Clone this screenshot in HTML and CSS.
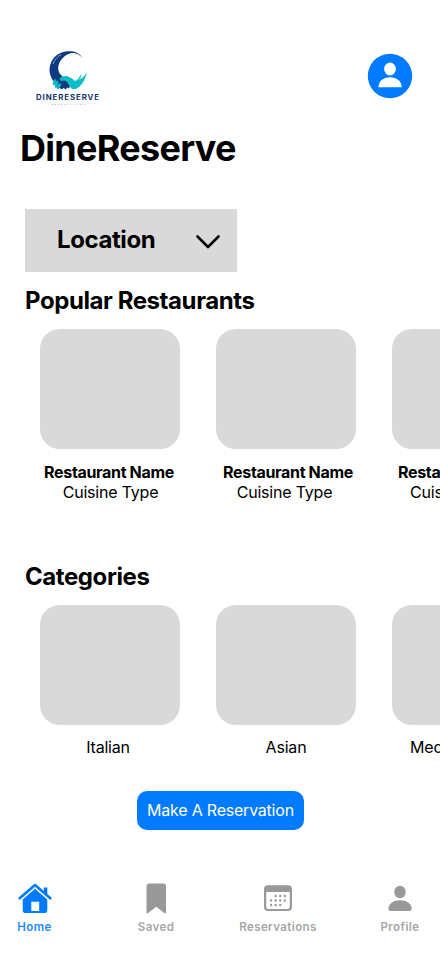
FILE: index.html
```html
<!DOCTYPE html>
<html lang="en">
<head>
<meta charset="utf-8">
<title>DineReserve</title>
<link rel="stylesheet" href="styles.css">
</head>
<body>
<header class="top">
  <svg class="logo" viewBox="0 0 90 75" role="img" aria-label="DineReserve logo">
    <path fill="#0b3a80" d="M57.700 18C54 12.500 49 10.900 43 11.200C32 11.700 24.500 20 24.500 30C24.500 34 26 37 28 41L38 37L35 34C32.500 30 32.500 25 36 20C39.500 15.500 44 13 48 13C52 13.300 55 15 57.700 18Z"/>
    <path fill="#103c7d" d="M27 36L36 36L42 41L45 46L44 48.500L42 47.500L41 49.500L38.500 48L37 49.500L34 47.500L31 44Z"/>
    <path fill="#08bfc9" d="M34.500 38.500C37 36.500 40 35.500 43 36.500L47 38.500L50 41C55 40 59.500 37 61.700 32.500C60.500 38 59 42 55 46C52 49 48 50.500 45.500 47.500L43.500 43L40 40.500L36 41Z"/>
    <path fill="#08bfc9" d="M56.500 34L53 39L50 41.500C54 41 56 38 56.500 34Z"/>
    <path stroke="#08b7c5" stroke-width="2.600" stroke-linecap="round" d="M30 40.500L29 44M32.300 42L31 46.500M35 44.500L33 47.800"/>
    <path stroke="#fff" stroke-width=".5" fill="none" d="M28 24C29.500 20 32 17 36 14.500"/>
    <text class="logo-name" x="11" y="60" textLength="64" lengthAdjust="spacingAndGlyphs">DINERESERVE</text>
    <text class="logo-sub" x="26.500" y="64.500" textLength="34">RESERVATION</text>
  </svg>
  <svg class="avatar" viewBox="0 0 46 46" role="img" aria-label="Account">
    <circle cx="23" cy="23" r="22.200" fill="#007aff"/>
    <ellipse cx="23" cy="16" rx="5.900" ry="6.500" fill="#fff"/>
    <path fill="#fff" d="M11.500 34.300C11.500 28.500 16 24.300 23 24.300S34.700 28.500 34.700 34.300Z"/>
  </svg>
</header>
<h1 class="title">DineReserve</h1>
<button class="location"><span>Location</span>
  <svg class="chevron" viewBox="0 0 24 14"><path d="M1.500 1.500L12 12L22.500 1.500"/></svg>
</button>
<section class="popular">
  <h2>Popular Restaurants</h2>
  <div class="cards">
    <article class="card"><div class="thumb"></div><h3>Restaurant Name</h3><p>Cuisine Type</p></article>
    <article class="card card-mid"><div class="thumb"></div><h3>Restaurant Name</h3><p>Cuisine Type</p></article>
    <article class="card card-last"><div class="thumb"></div><h3>Restaurant Name</h3><p>Cuisine Type</p></article>
  </div>
</section>
<section class="categories">
  <h2>Categories</h2>
  <div class="cards">
    <article class="card"><div class="thumb"></div><p>Italian</p></article>
    <article class="card"><div class="thumb"></div><p>Asian</p></article>
    <article class="card card-last"><div class="thumb"></div><p>Mediterranean</p></article>
  </div>
</section>
<button class="reserve">Make A Reservation</button>
<nav class="tabs">
  <a class="tab active">
    <svg viewBox="0 0 36 32">
      <path d="M2.700 15.300L18 2L33.300 15.300" fill="none" stroke="currentColor" stroke-width="2.600" stroke-linecap="round" stroke-linejoin="round"/>
      <path fill="currentColor" d="M26.800 4.500h3.500v8l-3.500-3Z"/>
      <path fill="currentColor" fill-rule="evenodd" d="M18 5.700L30.300 16.500V27.200Q30.300 30 27.500 30H8.500Q5.700 30 5.700 27.200V16.500ZM14.300 18.700V28H22.200V18.700Z"/>
    </svg>
    <span>Home</span>
  </a>
  <a class="tab">
    <svg viewBox="0 0 36 32"><path fill="currentColor" d="M8.500 3.500Q8.500 .5 11.500 .5H25Q28 .5 28 3.500V29.500Q27.500 31 26 29.800L18.300 23.800L10.500 29.800Q9 31 8.500 29.500Z"/></svg>
    <span>Saved</span>
  </a>
  <a class="tab">
    <svg viewBox="0 0 36 32">
      <path fill="currentColor" fill-rule="evenodd" d="M8 2.200H28Q32 2.200 32 6.200V24Q32 28 28 28H8Q4 28 4 24V6.200Q4 2.200 8 2.200ZM6.200 9.100V23.700Q6.200 26 8.500 26H27.500Q29.800 26 29.800 23.700V9.100Z"/>
      <path stroke="currentColor" stroke-width="2.400" stroke-linecap="round" stroke-dasharray="0 4.550" d="M15.700 13H25M11.100 17.500H25M11.100 22H20.500"/>
    </svg>
    <span>Reservations</span>
  </a>
  <a class="tab tab-last">
    <svg viewBox="0 0 36 32"><ellipse cx="18" cy="9" rx="5.700" ry="6.200" fill="currentColor"/><path fill="currentColor" d="M6.400 25.500C6.700 20.500 11.500 17.300 18 17.300S29.400 20.500 29.700 25.500Q29.700 28 27.500 28H8.600Q6.400 28 6.400 25.500Z"/></svg>
    <span>Profile</span>
  </a>
</nav>
</body>
</html>
```
FILE: styles.css
```css
* { box-sizing: border-box; }

body {
  margin: 0;
  width: 440px;
  height: 956px;
  overflow: hidden;
  background: #fff;
  color: #000;
  font-family: Inter, sans-serif;
  font-size: 16px;
  line-height: 20px;
}

h1, h2, h3, p { margin: 0; }
svg { display: block; }

.top {
  display: flex;
  justify-content: space-between;
  align-items: flex-start;
  padding: 40px 27px 0 25px;
  height: 126px;
}
.logo { width: 90px; height: 75px; }
.logo-name { font: 700 7px Inter, sans-serif; letter-spacing: 0.8px; fill: #17356c; }
.logo-sub { font: 400 2.6px Lato, sans-serif; fill: #75839b; }
.avatar { width: 46px; height: 46px; margin-top: 13px; }

.title {
  margin-left: 20px;
  font-size: 36px;
  line-height: 44px;
  letter-spacing: -0.7px;
}

.location {
  display: flex;
  align-items: center;
  justify-content: space-between;
  width: 212px;
  height: 63px;
  margin: 39px 0 14px 25px;
  padding: 0 17px 2px 32px;
  border: 0;
  background: #d9d9d9;
  color: #000;
  font: 700 24px/30px Inter, sans-serif;
  letter-spacing: -0.4px;
}
.chevron {
  width: 24px;
  height: 14px;
  margin-top: 5px;
  fill: none;
  stroke: #000;
  stroke-width: 2.6;
  stroke-linecap: round;
  stroke-linejoin: round;
}

h2 {
  margin-left: 25px;
  font-size: 24px;
  line-height: 30px;
  letter-spacing: -0.42px;
}
.cards {
  display: flex;
  gap: 36px;
  margin-top: 13px;
  padding-left: 40px;
  overflow: hidden;
}
.card {
  flex: 0 0 140px;
  text-align: center;
  white-space: nowrap;
}
.thumb {
  height: 120px;
  margin-bottom: 13px;
  border-radius: 20px;
  background: #d9d9d9;
}
.card h3 { font-size: 16px; line-height: 20px; letter-spacing: -0.33px; margin-left: -2px; }
.card p { letter-spacing: -0.2px; }
.card-mid h3 { margin-left: 4px; }
.card-mid p { margin-left: -3px; }
.card-last { text-align: left; }
.card-last h3 { margin-left: 6px; }
.card-last p { margin-left: 18px; }
.popular { height: 276px; }
.popular .card:first-child p { margin-left: 1px; }
.categories { height: 229px; }
.categories .thumb { margin-bottom: 12px; }
.categories .card:first-child p { margin-left: -4px; }

.reserve {
  display: block;
  width: 167px;
  height: 39px;
  margin-left: 137px;
  padding: 0 0 2px;
  border: 0;
  border-radius: 10px;
  background: #007aff;
  color: #fff;
  font: 400 16px/20px Inter, sans-serif;
  letter-spacing: -0.22px;
}

.tabs {
  display: grid;
  grid-template-columns: 69px 174px 70px 127px;
  margin-top: 53px;
  color: #999;
}
.tab {
  display: flex;
  flex-direction: column;
  align-items: center;
  font-size: 11.5px;
  font-weight: 600;
  line-height: 16px;
  letter-spacing: 0.4px;
}
.tab-last { padding-left: 47px; }
.tab svg { width: 36px; height: 32px; margin-bottom: 4px; }
.tab span { color: #a6a6a6; }
.active { color: #007aff; }
.active span { color: #208bff; }
```
